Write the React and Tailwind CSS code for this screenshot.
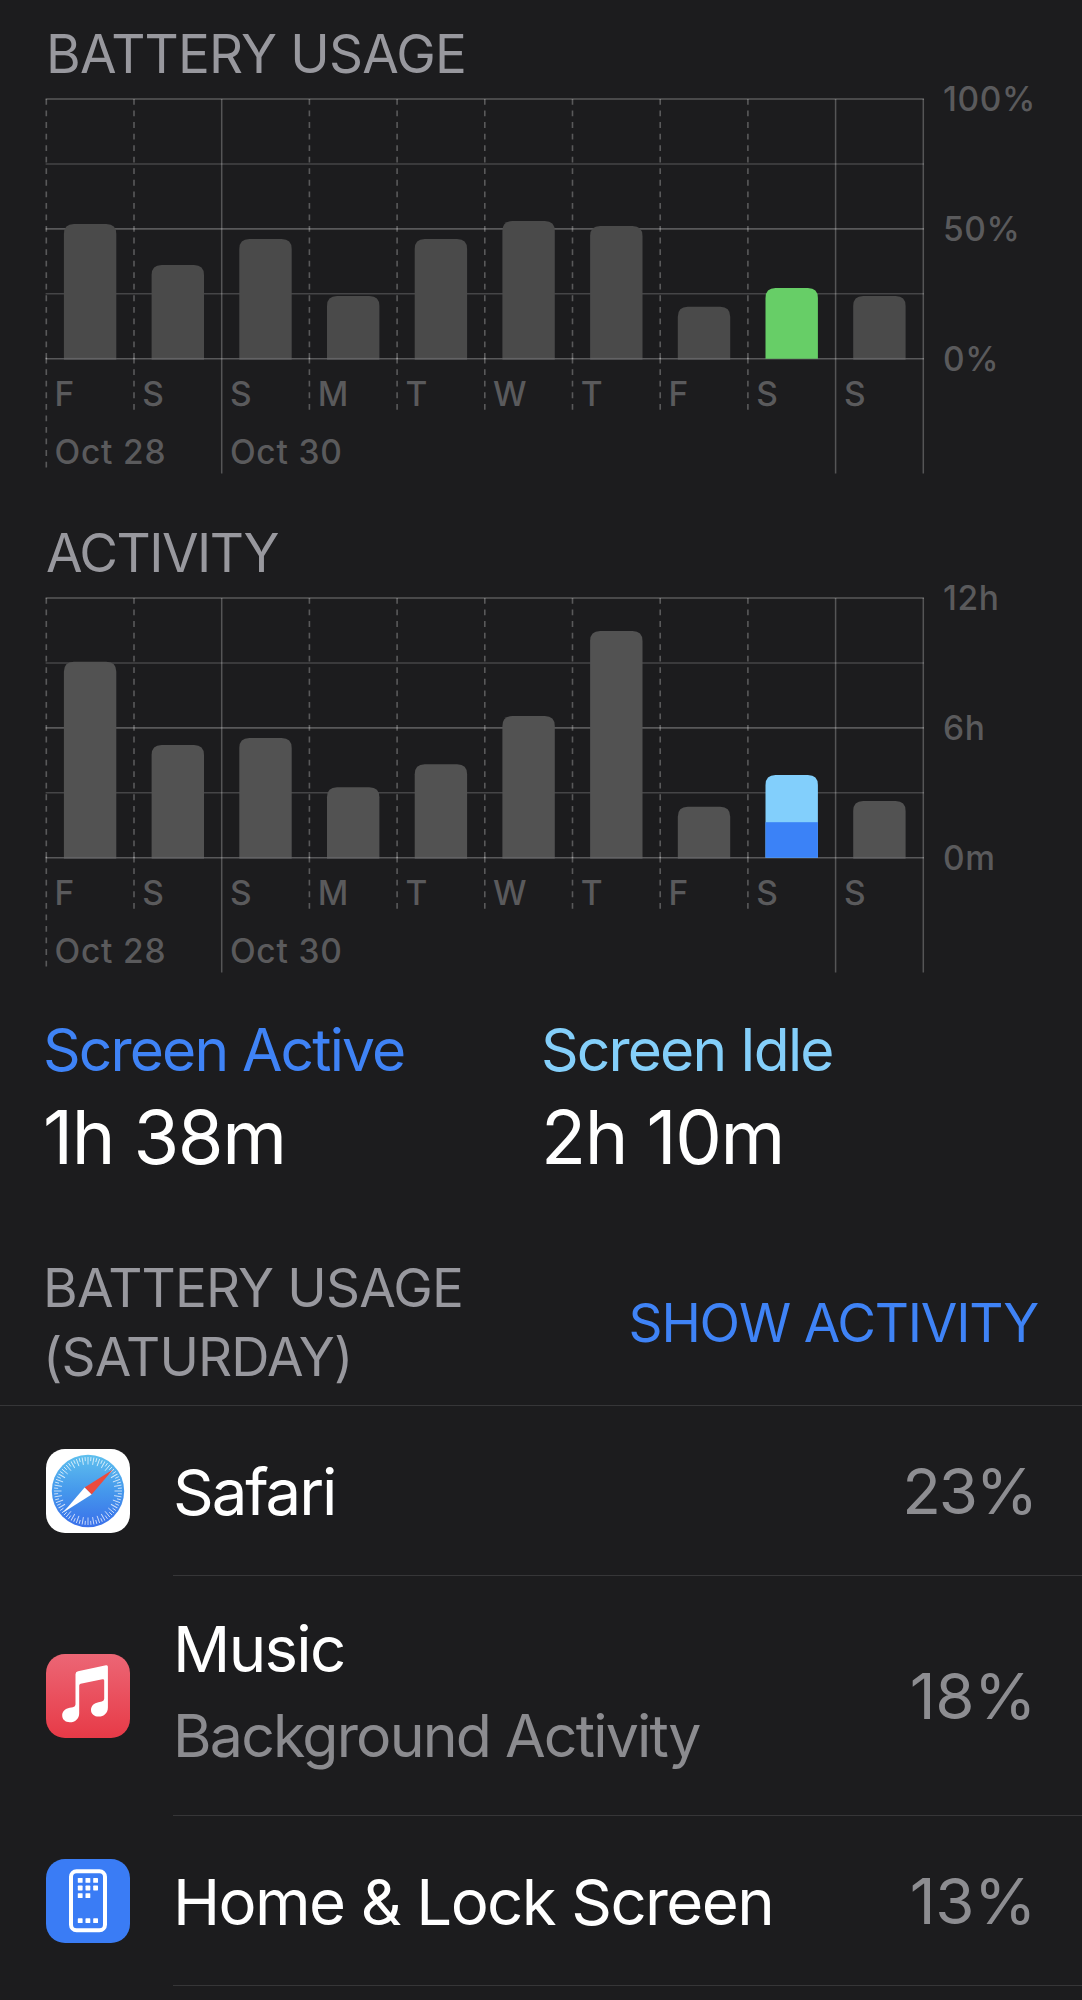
import React from "react";

const DAYS = ["F", "S", "S", "M", "T", "W", "T", "F", "S", "S"];
const COL = 87.7;
const LEFT = 46.3;
const TOP = 13;
const BASE = 272.7;
const RIGHT = LEFT + COL * 10;

// heights are in px above the baseline
const batteryBars = [
  { h: 134.7 },
  { h: 93.7 },
  { h: 119.7 },
  { h: 62.7 },
  { h: 119.7 },
  { h: 137.7 },
  { h: 132.7 },
  { h: 52 },
  { h: 70.7, fill: "#67ce67" },
  { h: 62.7 },
];

const activityBars = [
  { h: 196 },
  { h: 112.7 },
  { h: 119.7 },
  { h: 70.4 },
  { h: 93.4 },
  { h: 141.7 },
  { h: 226.7 },
  { h: 51 },
  { h: 82.7, fill: "#82cffc", part: 35.5, partFill: "#3b82f7" },
  { h: 56.7 },
];

const barPath = (x, h, w = 52.4, r = 10) =>
  `M${x} ${BASE}V${BASE - h + r}Q${x} ${BASE - h} ${x + r} ${BASE - h}H${x + w - r}Q${x + w} ${BASE - h} ${x + w} ${BASE - h + r}V${BASE}Z`;

const Chart = ({ bars, color, ticks }) => (
  <svg viewBox="0 0 1082 388" className="block h-[388px] w-full overflow-visible font-['Inter',sans-serif]">
    {[0, 1, 2, 3, 4].map((i) => (
      <line
        key={i}
        x1={LEFT - 0.7}
        x2={RIGHT + 0.7}
        y1={TOP + i * 64.93}
        y2={TOP + i * 64.93}
        stroke={i % 2 ? "#454547" : "#58585a"}
        strokeWidth="1.6"
      />
    ))}

    {bars.map((bar, i) => {
      const x = LEFT + COL * i + 17.6;
      return (
        <g key={i}>
          <path d={barPath(x, bar.h)} fill={bar.fill || color} />
          {bar.part && <rect x={x} y={BASE - bar.part} width="52.4" height={bar.part} fill={bar.partFill} />}
          {!bar.fill && <rect x={x} y={BASE - 0.8} width="52.4" height="1.6" fill="#626264" />}
        </g>
      );
    })}

    {Array.from({ length: 11 }).map((_, i) => {
      const x = LEFT + COL * i;
      if (i === 2 || i > 8) {
        return <line key={i} x1={x} x2={x} y1={TOP} y2="387.5" stroke="#fff" strokeOpacity="0.25" strokeWidth="1.5" />;
      }
      return (
        <g key={i} stroke="#fff" strokeOpacity="0.27" strokeWidth="1.6" strokeDasharray="5.8 5.75">
          <line x1={x} x2={x} y1={TOP} y2={BASE} />
          <line x1={x} x2={x} y1={BASE - 1} y2={i === 0 ? 382.5 : 324.5} />
        </g>
      );
    })}

    <g fill="#5a5a5c" fontSize="33.5" fontWeight="500">
      {DAYS.map((day, i) => (
        <text key={i} x={LEFT + COL * i + 8.3} y="320">{day}</text>
      ))}
      <text x={LEFT + 8.2} y="378.3" letterSpacing="0.8">Oct 28</text>
      <text x={LEFT + COL * 2 + 8.2} y="378.3" letterSpacing="0.8">Oct 30</text>
      {ticks.map((tick, i) => (
        <text key={tick} x="943" y={TOP + 12.3 + i * 129.8} letterSpacing="0.6">{tick}</text>
      ))}
    </g>
  </svg>
);

const Heading = ({ children, className }) => (
  <h2 className={`h-16 text-[53px] leading-[64px] text-[#98989e] ${className}`}>{children}</h2>
);

const Stat = ({ label, value, className }) => (
  <div className="w-[498px]">
    <p className={`text-[58.7px] leading-[60px] tracking-[-1.85px] ${className}`}>{label}</p>
    <p className="mt-5 text-[74px] leading-[74px] tracking-[-1.4px] text-white">{value}</p>
  </div>
);

const SafariIcon = () => (
  <svg viewBox="0 0 84 84" className="size-[84px] shrink-0">
    <defs>
      <linearGradient id="safari" x1="0" y1="0" x2="0" y2="1">
        <stop offset="0" stopColor="#5fc0ee" />
        <stop offset="0.5" stopColor="#4598ec" />
        <stop offset="1" stopColor="#3a70ea" />
      </linearGradient>
    </defs>
    <rect width="84" height="84" rx="19" fill="#fff" />
    <circle cx="42" cy="42" r="36.2" fill="url(#safari)" />
    {Array.from({ length: 72 }).map((_, i) => (
      <line
        key={i}
        x1="42"
        x2="42"
        y1="8"
        y2={i % 2 ? 12 : 15.5}
        stroke="#fff"
        strokeOpacity="0.75"
        strokeWidth="0.9"
        transform={`rotate(${i * 5} 42 42)`}
      />
    ))}
    <path d="M67 20.5 38.6 38.4 45.6 45.4Z" fill="#eb4b3d" />
    <path d="M17.2 63.5 38.6 38.4 45.6 45.4Z" fill="#fff" />
  </svg>
);

const MusicIcon = () => (
  <svg viewBox="0 0 84 84" className="size-[84px] shrink-0">
    <defs>
      <linearGradient id="music" x1="0" y1="0" x2="0" y2="1">
        <stop offset="0" stopColor="#ec6675" />
        <stop offset="1" stopColor="#e73a47" />
      </linearGradient>
    </defs>
    <rect width="84" height="84" rx="19" fill="url(#music)" />
    <path
      d="M32 17.3 60 11.3Q61.9 10.9 61.9 12.8V53.5C61.9 59 58 62.6 52.6 62.6 48.3 62.6 45 60 45 56 45 51.7 48 49 52.5 48.2L55.8 47.6Q58.2 47.1 58.2 44.8V26.6Q58.2 24.8 56.4 25.2L34.6 29.7Q33.2 30 33.2 31.6V59.2C33.2 64.7 29.2 68.3 23.8 68.3 19.4 68.3 16.2 65.6 16.2 61.6 16.2 57.4 19.1 54.6 23.7 53.8L26.9 53.2Q29.5 52.7 29.5 50.4V20.2Q29.5 17.8 32 17.3Z"
      fill="#fff"
    />
  </svg>
);

const HomeIcon = () => (
  <svg viewBox="0 0 84 84" className="size-[84px] shrink-0">
    <rect width="84" height="84" rx="19" fill="#3a7cf5" />
    <rect x="25" y="12.2" width="34" height="59" rx="5.5" fill="none" stroke="#fff" strokeWidth="4" />
    {[
      [0, 0], [1, 0], [2, 0],
      [0, 1], [1, 1], [2, 1],
      [0, 2], [1, 2],
      [0, 5.3], [1, 5.3], [2, 5.3],
    ].map(([c, r]) => (
      <rect key={`${c}-${r}`} x={31.8 + c * 7.7} y={19 + r * 7.6} width="4.8" height="4.8" rx="0.6" fill="#fff" />
    ))}
  </svg>
);

const apps = [
  { name: "Safari", percent: "23%", icon: SafariIcon, height: "h-[170px]", nameClass: "tracking-[-2.1px]", percentClass: "tracking-[-2.2px]" },
  { name: "Music", note: "Background Activity", percent: "18%", icon: MusicIcon, height: "h-[240px]", nameClass: "tracking-[-1.7px]", percentClass: "tracking-[-0.4px]" },
  { name: "Home & Lock Screen", percent: "13%", icon: HomeIcon, height: "h-[170px]", nameClass: "tracking-[-1.6px]", percentClass: "tracking-[-0.4px]" },
];

const AppRow = ({ app }) => {
  const Icon = app.icon;
  return (
    <li className={`flex items-center pl-[46px] ${app.height}`}>
      <Icon />
      <div className="ml-[43px] flex h-full flex-1 items-center justify-between border-b border-[#363638] pr-[46px]">
        <div className={app.note ? "pb-[7px]" : "pt-[1px]"}>
          <p className={`text-[63.5px] leading-[87px] text-white ${app.nameClass}`}>{app.name}</p>
          {app.note && <p className="text-[59px] leading-[87px] tracking-[-1.8px] text-[#8b8b8f]">{app.note}</p>}
        </div>
        <span className={`text-[63.5px] leading-[87px] text-[#8d8d91] ${app.percentClass}`}>{app.percent}</span>
      </div>
    </li>
  );
};

export default function App() {
  return (
    <main className="h-[2000px] w-[1082px] overflow-hidden bg-[#1c1c1e] pt-[22px] font-['Inter',sans-serif] whitespace-nowrap">
      <section>
        <Heading className="pl-[46px] tracking-[-0.8px]">BATTERY USAGE</Heading>
        <Chart bars={batteryBars} color="#4a4a4a" ticks={["100%", "50%", "0%"]} />
      </section>

      <section className="mt-[47px]">
        <Heading className="pl-[46px] tracking-[-1.5px]">ACTIVITY</Heading>
        <Chart bars={activityBars} color="#525252" ticks={["12h", "6h", "0m"]} />
      </section>

      <section className="mt-[47px] flex pl-[43px]">
        <Stat label="Screen Active" value="1h 38m" className="text-[#3f83f6]" />
        <Stat label="Screen Idle" value="2h 10m" className="text-[#84cffa]" />
      </section>

      <section className="mt-20">
        <div className="flex items-center justify-between border-b border-[#363638] pr-[44px] pb-[13px] pl-[43px]">
          <h2 className="text-[53px] leading-[69px] tracking-[-0.8px] text-[#98989e]">
            BATTERY USAGE
            <br />
            (SATURDAY)
          </h2>
          <button className="text-[53px] leading-[69px] tracking-[-1.2px] text-[#3f83f6]">SHOW ACTIVITY</button>
        </div>
        <ul>
          {apps.map((app) => (
            <AppRow key={app.name} app={app} />
          ))}
        </ul>
      </section>
    </main>
  );
}
